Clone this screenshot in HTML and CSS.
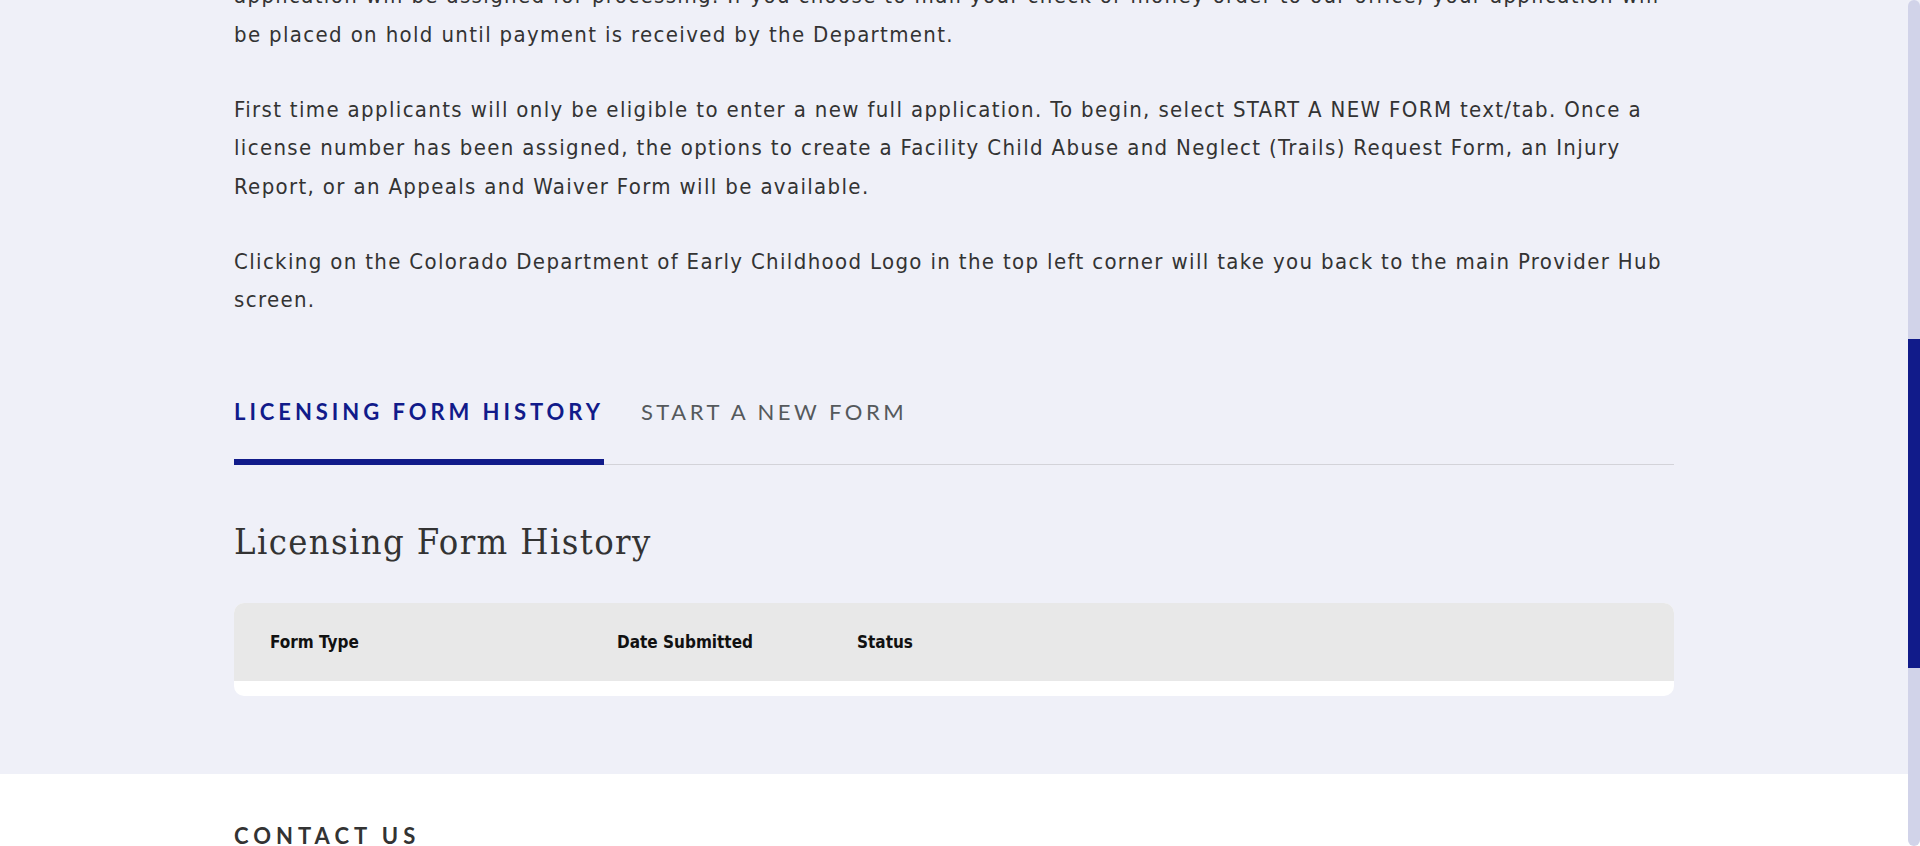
FILE: index.html
```html
<!DOCTYPE html>
<html lang="en">
<head>
<meta charset="utf-8">
<title>Licensing Forms</title>
<link rel="stylesheet" href="styles.css">
</head>
<body>
<main class="main">
  <div class="container intro">
    <p>application will be assigned for processing. If you choose to mail your check or money order to our office, your application will be placed on hold until payment is received by the Department.</p>
    <p>First time applicants will only be eligible to enter a new full application. To begin, select START A NEW FORM text/tab. Once a license number has been assigned, the options to create a Facility Child Abuse and Neglect (Trails) Request Form, an Injury Report, or an Appeals and Waiver Form will be available.</p>
    <p>Clicking on the Colorado Department of Early Childhood Logo in the top left corner will take you back to the main Provider Hub screen.</p>
  </div>
  <div class="container">
    <nav class="tabs">
      <a class="tab tab-active">LICENSING FORM HISTORY</a>
      <a class="tab">START A NEW FORM</a>
    </nav>
    <h2 class="heading">Licensing Form History</h2>
    <div class="table">
      <div class="table-head">
        <span>Form Type</span>
        <span>Date Submitted</span>
        <span>Status</span>
      </div>
      <div class="table-body"></div>
    </div>
  </div>
</main>
<footer class="footer">
  <div class="container">
    <h3 class="footer-title">CONTACT US</h3>
  </div>
</footer>
<div class="scrollbar"><div class="scrollbar-thumb"></div></div>
</body>
</html>
```
FILE: styles.css
```css
html, body {
  margin: 0;
  padding: 0;
  height: 100%;
  overflow: hidden;
}
body {
  font-family: "DejaVu Sans", sans-serif;
  font-stretch: condensed;
  color: #333333;
  background: #ffffff;
}
.main {
  background: #eff0f8;
  padding: 0 12px 78px 0;
}
.footer {
  background: #ffffff;
  padding: 52px 12px 0 0;
}
.container {
  width: 1440px;
  margin: 0 auto;
}
.intro {
  margin-top: -23px;
}
.intro p {
  font-size: 22px;
  line-height: 38.5px;
  letter-spacing: 1.35px;
  margin: 0 0 36.5px;
}
.intro p:last-child {
  margin-bottom: 0;
}
.tabs {
  display: flex;
  gap: 37px;
  margin-top: 78px;
  border-bottom: 1px solid #d3d3d9;
}
.tab {
  font-family: Lato, sans-serif;
  font-stretch: normal;
  font-size: 22px;
  line-height: 27px;
  letter-spacing: 3.5px;
  color: #55595c;
  padding: 0 0 34px;
  border-bottom: 6px solid transparent;
  margin-bottom: -1px;
}
.tab-active {
  color: #111b8a;
  font-weight: 700;
  letter-spacing: 3.95px;
  border-bottom-color: #111b8a;
}
.heading {
  font-family: "DejaVu Serif", serif;
  font-stretch: condensed;
  font-weight: 400;
  font-size: 36px;
  line-height: 43px;
  letter-spacing: 1.4px;
  color: #333333;
  margin: 55px 0 40px;
}
.table {
  border-radius: 10px;
  overflow: hidden;
  background: #ffffff;
}
.table-head {
  display: grid;
  grid-template-columns: 347px 240px 1fr;
  align-items: center;
  height: 78px;
  padding: 0 36px;
  background: #e8e8e8;
  font-size: 17px;
  font-weight: 700;
  color: #111111;
}
.table-body {
  height: 15px;
}
.footer-title {
  margin: 0;
  font-family: Lato, sans-serif;
  font-stretch: normal;
  font-size: 22px;
  line-height: 20px;
  font-weight: 700;
  letter-spacing: 5px;
  color: #333333;
}
.scrollbar {
  position: fixed;
  top: 0;
  right: 0;
  width: 12px;
  height: 100%;
  background: #d1d3e9;
  border-radius: 6px;
}
.scrollbar-thumb {
  margin-top: 339px;
  height: 329px;
  background: #111b8a;
}
```
